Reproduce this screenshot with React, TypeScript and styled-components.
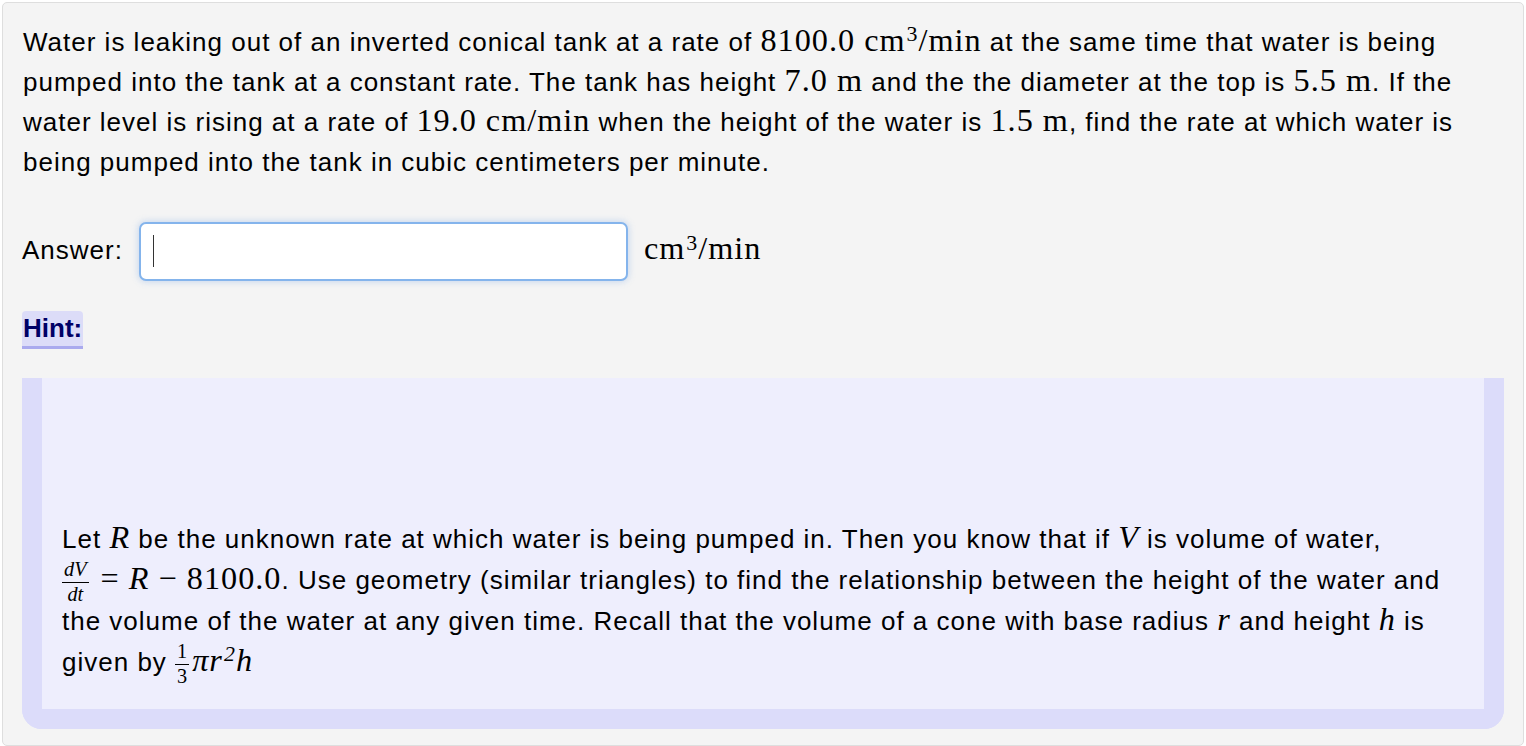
import React from "react";
import styled, { createGlobalStyle } from "styled-components";

const GlobalStyle = createGlobalStyle`
  html, body {
    margin: 0;
    background: #ffffff;
  }
  body {
    font-family: "Liberation Sans", Arial, Helvetica, sans-serif;
  }
`;

export default function App() {
  return (
    <>
      <GlobalStyle />
      <Card>
        <Question>
          Water is leaking out of an inverted conical tank at a rate of{" "}
          <M>
            8100.0 cm<Sup>3</Sup>/min
          </M>{" "}
          at the same time that water is being pumped into the tank at a constant rate. The
          tank has height <M>7.0 m</M> and the the diameter at the top is <M>5.5 m</M>. If the
          water level is rising at a rate of <M>19.0 cm/min</M> when the height of the water is{" "}
          <M>1.5 m</M>, find the rate at which water is being pumped into the tank in cubic
          centimeters per minute.
        </Question>

        <AnswerRow>
          <Label>Answer:</Label>
          <InputWrap>
            <AnswerInput type="text" aria-label="Answer" />
            <Caret />
          </InputWrap>
          <Units>
            cm<Sup>3</Sup>/min
          </Units>
        </AnswerRow>

        <HintTitle>Hint:</HintTitle>

        <HintBox>
          <HintText>
            Let <Var>R</Var> be the unknown rate at which water is being pumped in. Then you know
            that if <Var>V</Var> is volume of water,{" "}
            <Equation>
              <Frac>
                <Num>
                  <i>dV</i>
                </Num>
                <Den>
                  <i>dt</i>
                </Den>
              </Frac>
              <M>
                {" "}= <i>R</i> − 8100.0
              </M>
              .
            </Equation>{" "}
            Use geometry (similar triangles) to find the relationship between the height of the
            water and the volume of the water at any given time. Recall that the volume of a cone
            with base radius <Var>r</Var> and height <Var>h</Var> is given by{" "}
            <Equation>
              <Frac>
                <Num>1</Num>
                <Den>3</Den>
              </Frac>
              <M>
                <i>
                  πr<Sup>2</Sup>h
                </i>
              </M>
            </Equation>
          </HintText>
        </HintBox>
      </Card>
    </>
  );
}

const Card = styled.div`
  margin: 2px;
  padding: 19px 19px 16px;
  background: #f4f4f4;
  border: 1px solid #dedede;
  border-radius: 5px;
  font-size: 26px;
  letter-spacing: 1px;
  line-height: 40px;
  color: #000;
`;

const Question = styled.p`
  margin: 0;
  padding-left: 1px;
`;

const M = styled.span`
  font-family: "Liberation Serif", "Times New Roman", serif;
  font-size: 1.24em;
  line-height: 0;
  white-space: nowrap;
`;

const Var = styled(M)`
  font-style: italic;
`;

const Equation = styled.span`
  white-space: nowrap;
`;

const Sup = styled.sup`
  font-size: 0.68em;
  vertical-align: 0.45em;
  line-height: 0;
  margin-left: 1px;
`;

const AnswerRow = styled.div`
  display: flex;
  align-items: center;
  gap: 16px;
  margin-top: 40px;
`;

const Label = styled.span`
  line-height: 1;
  margin-top: -4px;
`;

const Units = styled.span`
  font-family: "Liberation Serif", "Times New Roman", serif;
  font-size: 1.24em;
  line-height: 1;
  margin-top: -6px;
`;

const InputWrap = styled.div`
  position: relative;
  display: flex;
`;

const AnswerInput = styled.input`
  box-sizing: border-box;
  width: 489px;
  height: 59px;
  padding: 0 14px;
  background: #ffffff;
  border: 2px solid #84b4ec;
  border-radius: 7px;
  box-shadow: 0 0 6px 1px rgba(120, 165, 230, 0.35);
  font-family: "Liberation Sans", Arial, sans-serif;
  font-size: 26px;
  outline: none;
`;

const Caret = styled.span`
  position: absolute;
  left: 14px;
  top: 13px;
  width: 1px;
  height: 32px;
  background: #333333;
`;

const HintTitle = styled.div`
  display: inline-block;
  margin-top: 30px;
  padding: 0 1px;
  line-height: 35px;
  font-weight: bold;
  color: #000066;
  background: #dcdcf8;
  border-bottom: 3px solid #aaaaee;
  border-radius: 4px 4px 0 0;
  letter-spacing: 0;
`;

const HintBox = styled.div`
  margin-top: 29px;
  background: #eeeefd;
  border: 20px solid #dcdcfa;
  border-top: 0;
  border-radius: 0 0 20px 20px;
  padding: 141px 20px 26px;
`;

const HintText = styled.p`
  margin: 0;
  line-height: 41px;
`;

const Frac = styled.span`
  display: inline-flex;
  flex-direction: column;
  align-items: center;
  vertical-align: middle;
  margin: -10px 3px -10px 0;
  font-family: "Liberation Serif", "Times New Roman", serif;
  font-size: 0.78em;
  line-height: 1.05;
  letter-spacing: 0;
`;

const Num = styled.span`
  padding: 0 2px 1px;
  border-bottom: 1px solid #000;
`;

const Den = styled.span`
  padding: 1px 2px 0;
`;
